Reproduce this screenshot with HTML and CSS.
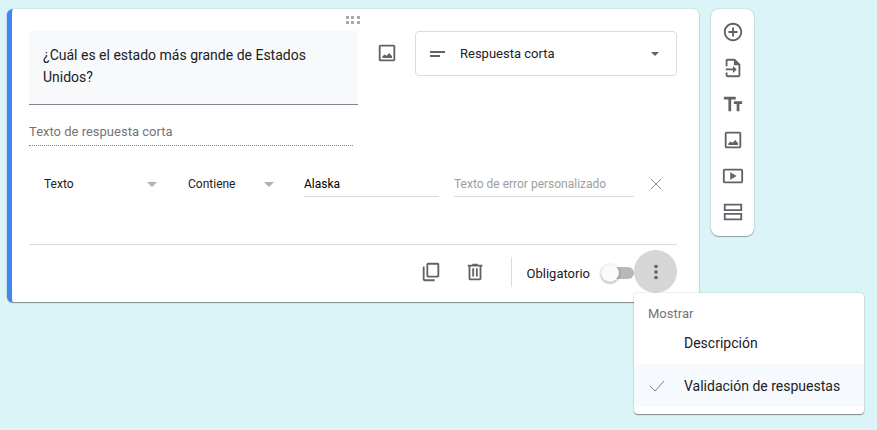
FILE: index.html
```html
<!DOCTYPE html>
<html lang="es">
<head>
  <meta charset="utf-8">
  <title>Formulario</title>
  <link rel="stylesheet" href="styles.css">
</head>
<body>
  <main class="editor">
    <form class="card">
      <div class="drag-handle">
        <svg width="14" height="8" viewBox="0 0 14 8" fill="#aaa">
          <path d="M0 0h3v3H0zM5 0h3v3H5zM11 0h3v3h-3zM0 5h3v3H0zM5 5h3v3H5zM11 5h3v3h-3z"/>
        </svg>
      </div>

      <!-- Question title and type -->
      <div class="question-row">
        <textarea class="question-title" aria-label="Pregunta" rows="2">¿Cuál es el estado más grande de Estados Unidos?</textarea>
        <button type="button" class="icon-button" aria-label="Agregar imagen">
          <svg width="22" height="22" viewBox="0 0 24 24"><path d="M19 5v14H5V5h14m0-2H5c-1.100 0-2 .9-2 2v14c0 1.100.9 2 2 2h14c1.100 0 2-.9 2-2V5c0-1.100-.9-2-2-2zM7 17.500v-2l2.500-2 2 1.500 3-3 3 3.500v2z"/></svg>
        </button>
        <div class="type-box">
          <svg width="16" height="8" viewBox="0 0 16 8"><path d="M0 1h15v2H0zM0 5h10v2H0z"/></svg>
          <select class="type-select" aria-label="Tipo de pregunta">
            <option>Respuesta corta</option>
          </select>
          <svg width="8" height="4" viewBox="0 0 8 4"><path d="M0 0h8L4 4z"/></svg>
        </div>
      </div>

      <input class="short-answer" type="text" placeholder="Texto de respuesta corta" aria-label="Respuesta" disabled>

      <!-- Response validation -->
      <div class="validation-row">
        <div class="small-box">
          <select class="small-select" aria-label="Tipo de validación">
            <option>Texto</option>
          </select>
          <svg width="10" height="5" viewBox="0 0 10 5"><path d="M0 0h10L5 5z"/></svg>
        </div>
        <div class="small-box condition">
          <select class="small-select" aria-label="Condición">
            <option>Contiene</option>
          </select>
          <svg width="10" height="5" viewBox="0 0 10 5"><path d="M0 0h10L5 5z"/></svg>
        </div>
        <input class="line-input value" type="text" value="Alaska" aria-label="Valor">
        <input class="line-input error" type="text" placeholder="Texto de error personalizado" aria-label="Texto de error">
        <button type="button" class="icon-button remove" aria-label="Quitar">
          <svg width="12" height="12" viewBox="0 0 12 12"><path d="M1 1l10 10M11 1L1 11"/></svg>
        </button>
      </div>

      <div class="card-footer">
        <button type="button" class="icon-button" aria-label="Duplicar">
          <svg width="22" height="22" viewBox="0 0 24 24"><path d="M19 2H9c-1.100 0-2 .9-2 2v12c0 1.100.9 2 2 2h10c1.100 0 2-.9 2-2V4c0-1.100-.9-2-2-2zm0 14H9V4h10zM3 6h2v14h11v2H5c-1.100 0-2-.9-2-2z"/></svg>
        </button>
        <button type="button" class="icon-button" aria-label="Eliminar">
          <svg width="22" height="22" viewBox="0 0 24 24"><path d="M15 4V3H9v1H4v2h1v13c0 1.100.9 2 2 2h10c1.100 0 2-.9 2-2V6h1V4h-5zm2 15H7V6h10v13zM9 8h2v9H9zM13 8h2v9h-2z"/></svg>
        </button>
        <div class="required">
          <label for="required">Obligatorio</label>
          <input type="checkbox" id="required" class="toggle" role="switch">
        </div>
        <div class="more">
          <button type="button" class="more-button" aria-label="Más opciones" aria-expanded="true">
            <svg width="22" height="22" viewBox="0 0 24 24"><circle cx="12" cy="6" r="2"/><circle cx="12" cy="12" r="2"/><circle cx="12" cy="18" r="2"/></svg>
          </button>
          <div class="menu" role="menu">
            <div class="menu-title">Mostrar</div>
            <button type="button" class="menu-item" role="menuitemcheckbox" aria-checked="false">
              <span class="menu-check"></span>
              Descripción
            </button>
            <button type="button" class="menu-item selected" role="menuitemcheckbox" aria-checked="true">
              <span class="menu-check">
                <svg width="16" height="12" viewBox="0 0 16 12"><path d="M1 6l5 5L15 1"/></svg>
              </span>
              Validación de respuestas
            </button>
          </div>
        </div>
      </div>
    </form>

    <!-- Side toolbar -->
    <nav class="toolbar">
      <button type="button" class="icon-button" aria-label="Agregar pregunta">
        <svg width="22" height="22" viewBox="0 0 24 24"><path d="M13 7h-2v4H7v2h4v4h2v-4h4v-2h-4zM12 2C6.480 2 2 6.480 2 12s4.480 10 10 10 10-4.480 10-10S17.520 2 12 2zm0 18c-4.410 0-8-3.590-8-8s3.590-8 8-8 8 3.590 8 8-3.590 8-8 8z"/></svg>
      </button>
      <button type="button" class="icon-button" aria-label="Importar preguntas">
        <svg width="22" height="22" viewBox="0 0 24 24"><path d="M14 2H6c-1.100 0-2 .9-2 2v6h2V4h7v5h5v11H6v-3H4v3c0 1.100.9 2 2 2h12c1.100 0 2-.9 2-2V8zM12 9.500L16 13.500 12 17.500V14.500H4v-2h8z"/></svg>
      </button>
      <button type="button" class="icon-button" aria-label="Agregar título">
        <svg width="22" height="22" viewBox="0 0 24 24"><path d="M2 4v3h5v13h3V7h5V4zM22 9h-9v3h3v8h3v-8h3z"/></svg>
      </button>
      <button type="button" class="icon-button" aria-label="Agregar imagen">
        <svg width="22" height="22" viewBox="0 0 24 24"><path d="M19 5v14H5V5h14m0-2H5c-1.100 0-2 .9-2 2v14c0 1.100.9 2 2 2h14c1.100 0 2-.9 2-2V5c0-1.100-.9-2-2-2zM7 17.500v-2l2.500-2 2 1.500 3-3 3 3.500v2z"/></svg>
      </button>
      <button type="button" class="icon-button" aria-label="Agregar video">
        <svg width="22" height="22" viewBox="0 0 24 24"><path d="M9 8v8l7-4zM21 4H3c-1.100 0-2 .9-2 2v12c0 1.100.9 2 2 2h18c1.100 0 2-.9 2-2V6c0-1.100-.9-2-2-2zm0 14H3V6h18z"/></svg>
      </button>
      <button type="button" class="icon-button" aria-label="Agregar sección">
        <svg width="22" height="22" viewBox="0 0 24 24"><path d="M20 5v4H4V5h16m2-2H2v8h20zM20 15v4H4v-4h16m2-2H2v8h20z"/></svg>
      </button>
    </nav>
  </main>
</body>
</html>
```
FILE: styles.css
```css
* {
  box-sizing: border-box;
}

body {
  margin: 0;
  min-height: 100vh;
  background-color: #daf4f8;
  color: #202124;
  font-family: Roboto, Arial, sans-serif;
  font-size: 13px;
}

button, input, select, textarea {
  font: inherit;
  color: inherit;
  margin: 0;
  padding: 0;
  border: none;
  background: none;
  outline: none;
}

button {
  cursor: pointer;
}

svg {
  display: block;
  flex-shrink: 0;
}

.editor {
  display: flex;
  align-items: flex-start;
  gap: 12px;
  padding: 9px 123px 9px 7px;
}

.card {
  flex: 1;
  min-width: 0;
  padding: 7px 22px 9px 17px;
  background-color: #fff;
  border-left: 5px solid #4285f4;
  border-radius: 6px;
  box-shadow: 0 1px 1px rgba(0, 0, 0, 0.4), 0 0 2px rgba(0, 0, 0, 0.2);
}

.drag-handle {
  display: flex;
  justify-content: center;
  height: 15px;
}

.icon-button {
  display: flex;
  justify-content: center;
  align-items: center;
  width: 44px;
  height: 43px;
  fill: #5f6368;
}

/* Question */
.question-row {
  display: flex;
  align-items: flex-start;
}

.question-title {
  flex: 1;
  min-width: 0;
  height: 74px;
  padding: 13px 14px;
  background-color: #f8f9fa;
  border-bottom: 1px solid #80868b;
  font-size: 14px;
  line-height: 22px;
  resize: none;
  overflow: hidden;
}

.question-row .icon-button {
  margin: 0 6px 0 7px;
}

.type-box {
  display: flex;
  align-items: center;
  gap: 14px;
  width: 262px;
  height: 45px;
  padding: 0 17px 0 14px;
  border: 1px solid #dadce0;
  border-radius: 4px;
  fill: #5f6368;
}

.type-select {
  flex: 1;
  height: 100%;
  appearance: none;
}

.short-answer {
  display: block;
  width: 50%;
  height: 28px;
  margin-top: 13px;
  border-bottom: 1px dotted #80868b;
}

.short-answer::placeholder {
  color: #757575;
}

/* Validation */
.validation-row {
  display: flex;
  align-items: center;
  height: 52px;
  margin-top: 12px;
  padding-left: 15px;
  font-size: 12px;
}

.small-box {
  display: flex;
  align-items: center;
  width: 113px;
  fill: #b0b0b0;
}

.small-box.condition {
  width: 86px;
  margin: 0 30px 0 31px;
}

.small-select {
  flex: 1;
  min-width: 0;
  height: 24px;
  appearance: none;
}

.line-input {
  min-width: 0;
  height: 26px;
  border-bottom: 1px solid #dadce0;
}

.line-input.value {
  flex: 3;
  color: #000;
}

.line-input.error {
  flex: 4;
  margin-left: 15px;
}

.line-input::placeholder {
  color: #9e9e9e;
}

.validation-row .remove {
  width: 43px;
}

.remove svg {
  fill: none;
  stroke: #8a8a8a;
}

/* Footer */
.card-footer {
  display: flex;
  justify-content: flex-end;
  align-items: center;
  margin-top: 34px;
  padding-top: 5px;
  border-top: 1px solid #dadce0;
}

.required {
  display: flex;
  align-items: center;
  gap: 11px;
  height: 30px;
  margin-left: 14px;
  padding: 3px 0 0 15px;
  border-left: 1px solid #dadce0;
}

.toggle {
  display: flex;
  align-items: center;
  width: 33px;
  height: 12px;
  border-radius: 6px;
  background-color: #b8b8b8;
  appearance: none;
  cursor: pointer;
}

.toggle::before {
  content: "";
  width: 18px;
  height: 18px;
  flex-shrink: 0;
  border-radius: 50%;
  background-color: #fafafa;
  box-shadow: 0 1px 3px rgba(0, 0, 0, 0.4);
}

.toggle:checked {
  justify-content: flex-end;
}

.more {
  position: relative;
}

.more-button {
  display: flex;
  justify-content: center;
  align-items: center;
  width: 43px;
  height: 43px;
  border-radius: 50%;
  background-color: #d6d6d6;
  fill: #5f6368;
}

.menu {
  position: absolute;
  top: 100%;
  left: 0;
  z-index: 10;
  width: 230px;
  padding: 7px 0;
  background-color: #fff;
  border-radius: 4px;
  box-shadow: 0 1px 1px rgba(0, 0, 0, 0.4), 0 0 2px rgba(0, 0, 0, 0.2);
}

.menu-title {
  height: 21px;
  padding-left: 14px;
  color: #757575;
  line-height: 28px;
}

.menu-item {
  display: flex;
  align-items: center;
  width: 100%;
  height: 43px;
  padding-left: 15px;
  font-size: 14px;
  text-align: left;
  white-space: nowrap;
}

.menu-item.selected {
  background-color: #f6f9fe;
}

.menu-check {
  width: 35px;
}

.menu-check svg {
  fill: none;
  stroke: #80868b;
}

/* Toolbar */
.toolbar {
  display: flex;
  flex-direction: column;
  gap: 6px;
  padding: 8px 0 9px;
  background-color: #fff;
  border-radius: 8px;
  box-shadow: 0 1px 1px rgba(0, 0, 0, 0.3), 0 0 2px rgba(0, 0, 0, 0.2);
}

.toolbar .icon-button {
  width: 43px;
  height: 30px;
}
```
